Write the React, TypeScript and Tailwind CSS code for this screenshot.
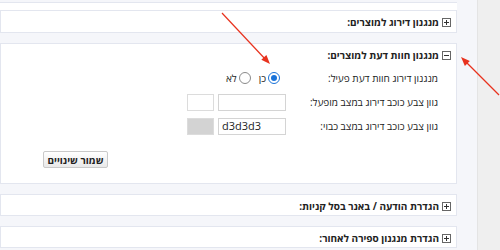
import React from "react";

const ToggleIcon = ({ open }: { open: boolean }) => (
    <svg width="9" height="9" viewBox="0 0 9 9" className="shrink-0">
        <rect x="0.5" y="0.5" width="8" height="8" fill="#fff" stroke="#666" />
        <line x1="2" y1="4.5" x2="7" y2="4.5" stroke="#333" />
        {!open && <line x1="4.5" y1="2" x2="4.5" y2="7" stroke="#333" />}
    </svg>
);

const PanelHeader = ({ title, open = false }: { title: string; open?: boolean }) => (
    <div className="flex h-[20px] items-center gap-[3px] pr-[5px] text-[10px] font-bold text-[#222]">
        <ToggleIcon open={open} />
        <span>{title}</span>
    </div>
);

const Radio = ({ checked }: { checked: boolean }) => (
    <span
        className={
            checked
                ? "flex h-[12px] w-[12px] items-center justify-center rounded-full border border-[#1a73d9] bg-white"
                : "flex h-[12px] w-[12px] items-center justify-center rounded-full border border-[#8a8a8a] bg-white"
        }
    >
        {checked && <span className="h-[6px] w-[6px] rounded-full bg-[#1a73d9]" />}
    </span>
);

const Row = ({ label, children }: { label: string; children: React.ReactNode }) => (
    <div className="flex h-[24px] items-center pr-[18px] text-[10px] text-[#222]">
        <div className="w-[152px] shrink-0">{label}</div>
        <div className="flex items-center">{children}</div>
    </div>
);

const ColorRow = ({ label, value, swatch }: { label: string; value: string; swatch?: string }) => (
    <Row label={label}>
        <div
            dir="ltr"
            className="flex h-[17px] w-[68px] items-center border border-[#d4d4d4] bg-white pl-[3px] text-[11px] text-[#222]"
        >
            {value}
        </div>
        <div
            className="mr-[4px] h-[17px] w-[27px] border border-[#dcdcdc]"
            style={{ backgroundColor: swatch ?? "#ffffff" }}
        />
    </Row>
);

export default function App() {
    return (
        <div
            dir="rtl"
            className="relative flex h-[250px] w-[500px] overflow-hidden"
            style={{ fontFamily: '"Open Sans", "Liberation Sans", Arial, sans-serif' }}
        >
            {/* side strip */}
            <div className="w-[23px] shrink-0 border-l border-[#e4e4e4] bg-[#efefef]" />

            <div className="flex flex-1 flex-col bg-[#f5f6fa] pr-[20px]">
                <div className="mt-[2px] h-[9px] border-y border-[#e3e6ef] bg-white" />

                <div className="h-[22px] border border-t-0 border-[#e3e6ef] bg-white pt-px">
                    <PanelHeader title="מנגנון דירוג למוצרים:" />
                </div>

                <div className="mt-[10px] h-[141px] border border-[#e3e6ef] bg-white pt-px">
                    <PanelHeader title="מנגנון חוות דעת למוצרים:" open />
                    <div className="mt-[1px]">
                        <Row label="מנגנון דירוג חוות דעת פעיל:">
                            <label className="mr-[6px] flex items-center gap-[2px]">
                                <Radio checked />
                                <span>כן</span>
                            </label>
                            <label className="mr-[8px] flex items-center gap-[2px]">
                                <Radio checked={false} />
                                <span>לא</span>
                            </label>
                        </Row>
                        <ColorRow label="גוון צבע כוכב דירוג במצב מופעל:" value="" />
                        <ColorRow label="גוון צבע כוכב דירוג במצב כבוי:" value="d3d3d3" swatch="#d3d3d3" />
                    </div>
                    <div className="mt-[13px] flex justify-end pl-[42px]">
                        <button className="h-[17px] w-[65px] whitespace-nowrap rounded-[2px] border border-[#c9c9c9] bg-gradient-to-b from-white to-[#e9e9e9] text-[10px] font-bold leading-none text-[#222]">
                            שמור שינויים
                        </button>
                    </div>
                </div>

                <div className="mt-[10px] h-[22px] border border-[#e3e6ef] bg-white pt-px">
                    <PanelHeader title="הגדרת הודעה / באנר בסל קניות:" />
                </div>

                <div className="mt-[10px] h-[22px] border border-[#e3e6ef] bg-white pt-px">
                    <PanelHeader title="הגדרת מנגנון ספירה לאחור:" />
                </div>
            </div>

            {/* annotation arrows */}
            <svg className="pointer-events-none absolute left-0 top-0" width="500" height="250">
                <line x1="222" y1="13" x2="266" y2="60" stroke="#e8321e" strokeWidth="1.2" />
                <polygon points="270,64 261.3,59.8 266.4,55" fill="#e8321e" />
                <line x1="499" y1="95" x2="465" y2="61" stroke="#e8321e" strokeWidth="1.2" />
                <polygon points="461,57 469.8,60.9 464.9,65.9" fill="#e8321e" />
            </svg>
        </div>
    );
}
